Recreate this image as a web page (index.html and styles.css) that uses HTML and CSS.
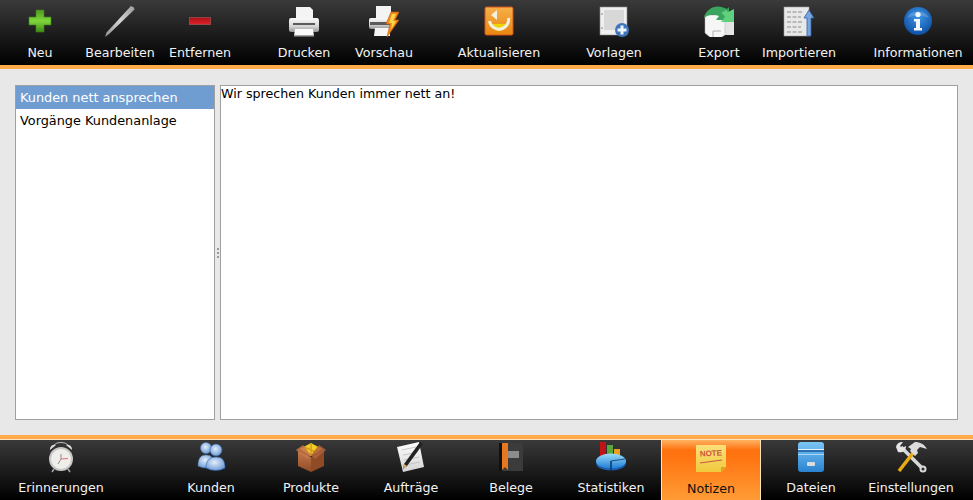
FILE: index.html
```html
<!DOCTYPE html>
<html lang="de">
<head>
    <meta charset="UTF-8">
    <title>Notizen</title>
    <link rel="stylesheet" href="styles.css">
</head>
<body>
    <svg class="defs" width="0" height="0">
        <defs>
            <linearGradient id="gGreen" x1="0" y1="0" x2="0" y2="1"><stop offset="0" stop-color="#4d9a1e"/><stop offset=".5" stop-color="#7fd63a"/><stop offset="1" stop-color="#3c8a18"/></linearGradient>
            <linearGradient id="gRed" x1="0" y1="0" x2="0" y2="1"><stop offset="0" stop-color="#a80f14"/><stop offset="1" stop-color="#e2252a"/></linearGradient>
            <linearGradient id="gSteel" x1="0" y1="1" x2="1" y2="1"><stop offset="0" stop-color="#8f8f8f"/><stop offset=".5" stop-color="#d4d4d4"/><stop offset="1" stop-color="#9c9c9c"/></linearGradient>
            <linearGradient id="gPaper" x1="0" y1="0" x2="0" y2="1"><stop offset="0" stop-color="#ffffff"/><stop offset="1" stop-color="#d4d4d4"/></linearGradient>
            <linearGradient id="gPrinter" x1="0" y1="0" x2="0" y2="1"><stop offset="0" stop-color="#fafafa"/><stop offset=".6" stop-color="#d4d4d4"/><stop offset="1" stop-color="#929292"/></linearGradient>
            <linearGradient id="gOrange" x1="0" y1="0" x2="0" y2="1"><stop offset="0" stop-color="#f7b04a"/><stop offset="1" stop-color="#e8860f"/></linearGradient>
            <radialGradient id="gInfo" cx=".5" cy=".35" r=".7"><stop offset="0" stop-color="#3f97e8"/><stop offset="1" stop-color="#0a4a9e"/></radialGradient>
            <radialGradient id="gPerson" cx=".45" cy=".4" r=".7"><stop offset="0" stop-color="#e4eefb"/><stop offset="1" stop-color="#5d8fd0"/></radialGradient>
            <linearGradient id="gBox" x1="0" y1="0" x2="0" y2="1"><stop offset="0" stop-color="#c47a4a"/><stop offset="1" stop-color="#8f4a26"/></linearGradient>
            <linearGradient id="gNote" x1="0" y1="0" x2="0" y2="1"><stop offset="0" stop-color="#fbe07a"/><stop offset="1" stop-color="#f0c93e"/></linearGradient>
            <linearGradient id="gCabinet" x1="0" y1="0" x2="0" y2="1"><stop offset="0" stop-color="#7cc6f5"/><stop offset="1" stop-color="#2a82d0"/></linearGradient>
            <linearGradient id="gPie" x1="0" y1="0" x2="0" y2="1"><stop offset="0" stop-color="#9bdcfa"/><stop offset="1" stop-color="#1f7ed6"/></linearGradient>
        </defs>
    </svg>

    <header class="toolbar">
        <div class="tool">
            <svg class="icon" viewBox="0 0 32 32"><path d="M12 5h8v7h7v8h-7v7h-8v-7H5v-8h7z" fill="url(#gGreen)" stroke="#3f7f1c" stroke-width=".6"/></svg>
            <span>Neu</span>
        </div>
        <div class="tool">
            <svg class="icon" viewBox="0 0 32 32"><path d="M27 1l3 1.500 .5 2L5 29l-4 3 1.500-4.500z" fill="url(#gSteel)"/></svg>
            <span>Bearbeiten</span>
        </div>
        <div class="tool">
            <svg class="icon" viewBox="0 0 32 32"><rect x="5" y="12" width="22" height="8" rx="1" fill="url(#gRed)"/><rect x="5.500" y="12.500" width="21" height="7" fill="none" stroke="#8a5050" stroke-width=".8"/></svg>
            <span>Entfernen</span>
        </div>
        <div class="tool tool-gap-a">
            <svg class="icon" viewBox="0 0 32 32"><path d="M8 2h14l3 3v10H8z" fill="#f4f4f4"/><path d="M3 13h26q2 0 2 3v9q0 2-2 2H3q-2 0-2-2v-9q0-3 2-3z" fill="url(#gPrinter)"/><rect x="5" y="18" width="22" height="2" fill="#5a5a5a"/><path d="M7 24h18l1 7H6z" fill="#fafafa"/><rect x="6" y="30" width="20" height="1.500" fill="#a5a5a5"/></svg>
            <span>Drucken</span>
        </div>
        <div class="tool">
            <svg class="icon" viewBox="0 0 32 32"><path d="M8 1h15v13H8z" fill="#f4f4f4"/><path d="M3 13h21v11H3q-2 0-2-2v-7q0-2 2-2z" fill="url(#gPrinter)"/><rect x="2" y="17" width="23" height="3" fill="#5a5a5a"/><path d="M7 23h15v8H6z" fill="#f5f5f5"/><path d="M23 7h8l-4 8h4L19 32l3-13h-4z" fill="#f08a1c" stroke="#c85c0a" stroke-width=".6"/><path d="M24 9h4l-3 7h3l-5 9 1-7h-3z" fill="#fbd54a"/></svg>
            <span>Vorschau</span>
        </div>
        <div class="tool tool-gap-b">
            <svg class="icon" viewBox="0 0 32 32"><rect x="2" y="2" width="28" height="28" rx="1.500" fill="url(#gOrange)" stroke="#d2501a"/><path d="M9 19a7 7 0 0 0 14 0z" fill="#ecd400"/><path d="M6.500 16a9.500 9.500 0 1 0 19-3" fill="none" stroke="#f3efe2" stroke-width="3"/><path d="M14 5v10l-6-5z" fill="#f3efe2"/></svg>
            <span>Aktualisieren</span>
        </div>
        <div class="tool tool-gap-b">
            <svg class="icon" viewBox="0 0 32 32"><rect x="2" y="2" width="27" height="28" fill="#f0f0f0" stroke="#8a8a8a" stroke-width=".6"/><rect x="6" y="5" width="20" height="20" fill="#d8d8d8"/><circle cx="4" cy="9" r="1" fill="#aaa"/><circle cx="4" cy="23" r="1" fill="#aaa"/><circle cx="24" cy="25" r="7" fill="#3f74bc"/><path d="M22.500 20.500h3v3h3v3h-3v3h-3v-3h-3v-3h3z" fill="#eef4fb"/></svg>
            <span>Vorlagen</span>
        </div>
        <div class="tool tool-gap-c">
            <svg class="icon" viewBox="0 0 32 32"><path d="M20 12h11v18H20z" fill="#e4e4e4"/><path d="M2 10h20v20l-5 3H8l-6-5z" fill="#f6f6f6" stroke="#b0b0b0" stroke-width=".5"/><path d="M10 32v-6h8" fill="none" stroke="#b0b0b0"/><path d="M1 13C3 3 14-2 24 4l2-2v13H13l3-4c-5-2-10-2-15 2z" fill="#3aa55e"/><path d="M31 4v13H18l4-5c-1-2-2-3-4-4l5-3 2 2z" fill="#5fd07e"/></svg>
            <span>Export</span>
        </div>
        <div class="tool">
            <svg class="icon" viewBox="0 0 32 32"><rect x="1" y="2" width="25" height="29" fill="#e8e8e8" stroke="#9a9a9a" stroke-width=".6"/><path d="M4 7h16M4 12h14M4 17h15M4 22h14M4 27h15" stroke="#8c8c8c" stroke-width="1.200" stroke-dasharray="4 1.500"/><path d="M26 5l5 8h-3v18h-4V13h-3z" fill="#7aa6e0" stroke="#2d5fa8" stroke-width=".8"/></svg>
            <span>Importieren</span>
        </div>
        <div class="tool tool-gap-d">
            <svg class="icon" viewBox="0 0 32 32"><circle cx="16" cy="16" r="14" fill="url(#gInfo)"/><path d="M5 13a11.500 9 0 0 1 22 0q-11-5-22 0z" fill="#fff" opacity=".18"/><circle cx="16" cy="9.500" r="2.600" fill="#f4f8fc"/><path d="M12 14h6v9h2v2.500h-8V23h2v-6.500h-2z" fill="#f4f8fc"/></svg>
            <span>Informationen</span>
        </div>
    </header>

    <main class="content">
        <ul class="note-list">
            <li class="selected">Kunden nett ansprechen</li>
            <li>Vorgänge Kundenanlage</li>
        </ul>
        <div class="splitter"><i></i><i></i><i></i></div>
        <div class="note-text">Wir sprechen Kunden immer nett an!</div>
    </main>

    <nav class="tabbar">
        <div class="tab tab-first">
            <svg class="icon" viewBox="0 0 32 32"><path d="M5 9a4.500 4.500 0 0 1 6-5zM27 9a4.500 4.500 0 0 0-6-5z" fill="#dcdcdc"/><path d="M9 4a8 5 0 0 1 14 0" fill="none" stroke="#bdbdbd"/><path d="M9 28l-2 3M23 28l2 3" stroke="#a8a8a8" stroke-width="1.500"/><circle cx="16" cy="18" r="12" fill="#c8c8c8"/><circle cx="16" cy="18" r="10" fill="#f0eeea"/><path d="M16 18l7-.500" stroke="#e07070"/><path d="M16 18v-5M16 18l-3 5" stroke="#9a8a8a"/></svg>
            <span>Erinnerungen</span>
        </div>
        <div class="tab tab-gap">
            <svg class="icon" viewBox="0 0 32 32"><circle cx="11" cy="7" r="5.500" fill="url(#gPerson)" stroke="#4a78b8" stroke-width=".5"/><path d="M3 25c0-8 3-11 8-11s8 3 8 11q-8 4-16 0z" fill="url(#gPerson)" stroke="#4a78b8" stroke-width=".5"/><circle cx="21" cy="9" r="6" fill="url(#gPerson)" stroke="#2e64ad" stroke-width=".6"/><path d="M11 27c0-8 4-11 10-11s9 3 9 11q-9 5-19 0z" fill="url(#gPerson)" stroke="#2e64ad" stroke-width=".6"/></svg>
            <span>Kunden</span>
        </div>
        <div class="tab">
            <svg class="icon" viewBox="0 0 32 32"><path d="M16 16l13-6v15l-13 6z" fill="#8f4a26"/><path d="M16 16L3 10v15l13 6z" fill="url(#gBox)"/><path d="M5 8l11-6 11 6-11 7z" fill="#f0d020"/><path d="M16 2v12M9 6l14 6" stroke="#d89a20" stroke-width="1.500"/><path d="M1 9l7-5 8 10-4 4z" fill="#c8764a" opacity=".85"/><path d="M31 9l-7-5-8 10 4 4z" fill="#b5633a" opacity=".85"/></svg>
            <span>Produkte</span>
        </div>
        <div class="tab">
            <svg class="icon" viewBox="0 0 32 32"><path d="M2 6l22-5 5 25-21 5z" fill="url(#gPaper)"/><path d="M7 9l14-3M8 14l15-3M9 19l15-3M10 24l15-3" stroke="#bdbdbd" stroke-width=".8"/><path d="M25 1l3 2L12 25l-4 3 1-5z" fill="#222"/><path d="M9 23l3 2-4 3z" fill="#d9b36a"/></svg>
            <span>Aufträge</span>
        </div>
        <div class="tab">
            <svg class="icon" viewBox="0 0 32 32"><rect x="4" y="2" width="24" height="28" fill="#3b3b3b"/><rect x="4" y="2" width="3" height="28" fill="#111"/><path d="M7 2h6v27l-3-3-3 3z" fill="#e8781e"/><rect x="13" y="10" width="11" height="7" fill="#8c8c8c"/></svg>
            <span>Belege</span>
        </div>
        <div class="tab">
            <svg class="icon" viewBox="0 0 32 32"><rect x="5" y="1" width="6" height="15" fill="#c01414"/><rect x="12" y="4" width="6" height="12" fill="#5aa83c"/><rect x="19" y="8" width="6" height="9" fill="#e8a020"/><ellipse cx="16" cy="22" rx="15" ry="7.500" fill="#1a5fb4"/><ellipse cx="16" cy="20" rx="15" ry="7.500" fill="url(#gPie)"/><path d="M16 20v10" stroke="#10355e" stroke-width="1.500"/><path d="M16 20l14-2" stroke="#10355e" stroke-width=".8"/></svg>
            <span>Statistiken</span>
        </div>
        <div class="tab active">
            <svg class="icon" viewBox="0 0 32 32"><path d="M1 3h30v22l-5 5H1z" fill="url(#gNote)"/><path d="M26 30v-5h5z" fill="#d8a820"/><text x="16" y="14" class="note-word" transform="rotate(-3 16 14)">NOTE</text><path d="M5 21l22-3" stroke="#c8553c"/></svg>
            <span>Notizen</span>
        </div>
        <div class="tab">
            <svg class="icon" viewBox="0 0 32 32"><rect x="3" y="1" width="26" height="30" rx="3" fill="url(#gCabinet)"/><rect x="3" y="8" width="26" height="1" fill="#e8f4fc"/><rect x="3" y="9" width="26" height="2" fill="#2a6fb0"/><rect x="3" y="13" width="26" height="1" fill="#a6d8f8"/><rect x="12" y="21" width="8" height="4" rx="1" fill="#d9dde2"/></svg>
            <span>Dateien</span>
        </div>
        <div class="tab">
            <svg class="icon" viewBox="0 0 32 32"><path d="M27 27L6 6" stroke="#d8d8d8" stroke-width="3.500"/><path d="M1 6a6 6 0 0 1 7-5L5 5l2 2 4-2a6 6 0 0 1-8 6z" fill="#e6e6e6"/><circle cx="28" cy="28" r="2.500" fill="#2a2a2a" stroke="#d8d8d8" stroke-width="2"/><path d="M18 12L4 30" stroke="#e8ad14" stroke-width="3.500"/><path d="M13 6l7-5c5 0 9 2 12 7l-7-2-3 3 1 3-3 3-5-5 1-2z" fill="#dcdcdc"/></svg>
            <span>Einstellungen</span>
        </div>
    </nav>
</body>
</html>
```

FILE: styles.css
```css
html, body {
    margin: 0;
    padding: 0;
}
body {
    height: 500px;
    overflow: hidden;
    display: flex;
    flex-direction: column;
    background: #e8e8e8;
    font-family: 'DejaVu Sans', sans-serif;
    font-size: 12.65px;
    color: #000;
}
.defs {
    display: block;
    height: 0;
}
.icon {
    display: block;
    width: 32px;
    height: 32px;
}
.toolbar {
    flex: none;
    display: flex;
    height: 65px;
    background: linear-gradient(#3a3a3a, #000);
    border-bottom: 4px solid #ffab4a;
}
.tool {
    width: 80px;
    padding-top: 5px;
    display: flex;
    flex-direction: column;
    align-items: center;
    color: #f2f2f2;
    white-space: nowrap;
}
.tool span {
    margin-top: 8px;
    line-height: 15px;
}
.tool-gap-a {
    margin-left: 24px;
}
.tool-gap-b {
    margin-left: 35px;
}
.tool-gap-c {
    margin-left: 25px;
}
.tool-gap-d {
    margin-left: 39px;
}
.content {
    flex: 1;
    display: flex;
    padding: 16px 15px 15px;
    min-height: 0;
}
.note-list {
    width: 198px;
    margin: 0;
    padding: 0;
    list-style: none;
    background: #fff;
    border: 1px solid #a0a0a0;
    font-size: 12.85px;
}
.note-list li {
    height: 23px;
    line-height: 23px;
    padding-left: 4px;
}
.note-list .selected {
    background: #6f9dd1;
    color: #fff;
}
.splitter {
    width: 5px;
    display: flex;
    flex-direction: column;
    align-items: center;
    justify-content: center;
    gap: 2px;
}
.splitter i {
    width: 2px;
    height: 2px;
    background: #9a9a9a;
}
.note-text {
    flex: 1;
    background: #fff;
    border: 1px solid #a0a0a0;
    line-height: 15px;
}
.tabbar {
    flex: none;
    display: flex;
    height: 61px;
    padding: 0 12px 0 11px;
    background: linear-gradient(#3a3a3a, #000);
    border-top: 4px solid #ffab4a;
    box-shadow: inset 0 1px 0 #ffe3bf;
}
.tab {
    width: 100px;
    padding-top: 2px;
    display: flex;
    flex-direction: column;
    align-items: center;
    color: #f2f2f2;
    white-space: nowrap;
}
.tab span {
    margin-top: 7px;
    line-height: 15px;
}
.tab-gap {
    margin-left: 50px;
}
.tab.active {
    box-sizing: border-box;
    color: #111;
    background: linear-gradient(#ffb260 0, #ff7210 10px, #ff7210 15px, #ff9c35 100%);
    border: solid #ffe3bf;
    border-width: 1px 1px 0;
}
.note-word {
    font-family: 'Liberation Sans', sans-serif;
    font-size: 8px;
    font-weight: bold;
    fill: #c8553c;
    text-anchor: middle;
}
```
